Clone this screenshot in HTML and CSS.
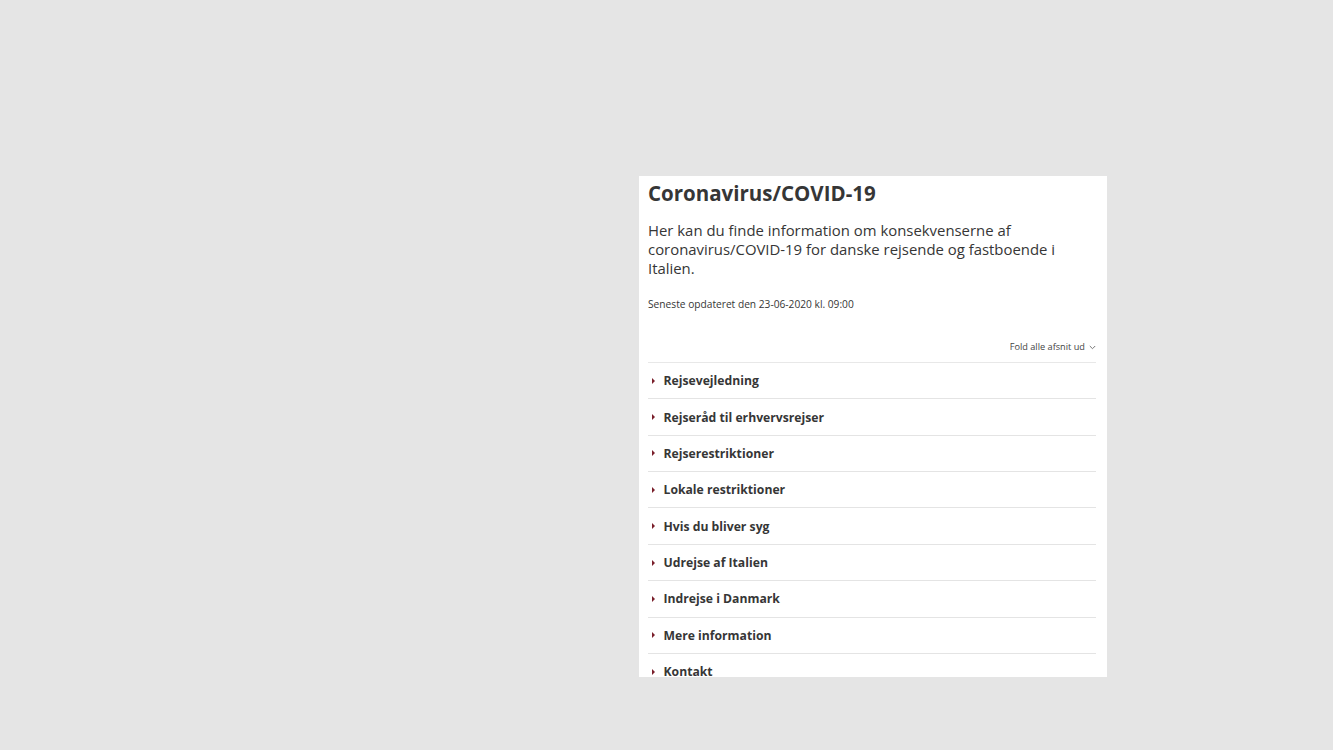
FILE: index.html
```
<!DOCTYPE html>
<html lang="da">
<head>
    <meta charset="UTF-8">
    <meta name="viewport" content="width=device-width, initial-scale=1.0">
    <title>Coronavirus/COVID-19</title>
    <link rel="stylesheet" href="styles.css">
</head>
<body>
    <div class="card">
        <h1 class="title">Coronavirus/COVID-19</h1>
        <p class="intro">Her kan du finde information om konsekvenserne af coronavirus/COVID-19 for danske rejsende og fastboende i Italien.</p>
        <p class="updated">Seneste opdateret den 23-06-2020 kl. 09:00</p>

        <div class="fold-all">
            <span>Fold alle afsnit ud</span>
            <svg class="chevron" width="7" height="5" viewBox="0 0 7 5">
                <path d="M0.8 1 L3.5 3.7 L6.2 1" fill="none" stroke="#777" stroke-width="1"/>
            </svg>
        </div>

        <ul class="sections">
            <li class="section"><span class="arrow"></span>Rejsevejledning</li>
            <li class="section"><span class="arrow"></span>Rejseråd til erhvervsrejser</li>
            <li class="section"><span class="arrow"></span>Rejserestriktioner</li>
            <li class="section"><span class="arrow"></span>Lokale restriktioner</li>
            <li class="section"><span class="arrow"></span>Hvis du bliver syg</li>
            <li class="section"><span class="arrow"></span>Udrejse af Italien</li>
            <li class="section"><span class="arrow"></span>Indrejse i Danmark</li>
            <li class="section"><span class="arrow"></span>Mere information</li>
            <li class="section"><span class="arrow"></span>Kontakt</li>
        </ul>
    </div>
</body>
</html>
```

FILE: styles.css
```
* {
    box-sizing: border-box;
    margin: 0;
    padding: 0;
}

html, body {
    width: 100%;
    height: 100%;
}

body {
    background-color: #e5e5e5;
    font-family: "Open Sans", "Noto Sans", sans-serif;
    color: #333;
    padding: 176px 0 0 639px;
    overflow: hidden;
}

.card {
    width: 468px;
    height: 501px;
    background-color: #fff;
    padding: 2px 11px 0 9px;
    overflow: hidden;
}

.title {
    font-size: 20.5px;
    font-weight: 700;
    line-height: 30px;
    color: #363636;
}

.intro {
    margin-top: 13px;
    font-size: 14.9px;
    line-height: 19.2px;
    color: #363636;
}

.updated {
    margin-top: 17.5px;
    font-size: 10.2px;
    line-height: 16px;
    color: #363636;
}

.fold-all {
    display: flex;
    justify-content: flex-end;
    align-items: center;
    gap: 4px;
    margin-top: 28px;
    font-size: 9.2px;
    line-height: 14px;
    color: #444;
    padding-bottom: 8px;
    border-bottom: 1px solid #e8e8e8;
}

.sections {
    list-style: none;
}

.section {
    display: flex;
    align-items: center;
    height: 36.35px;
    border-bottom: 1px solid #e4e4e4;
    font-size: 12.2px;
    font-weight: 700;
    color: #363636;
    padding-left: 4px;
}

.arrow {
    width: 0;
    height: 0;
    border-top: 3px solid transparent;
    border-bottom: 3px solid transparent;
    border-left: 3.5px solid #7a1f2b;
    margin-right: 8.5px;
}
```
